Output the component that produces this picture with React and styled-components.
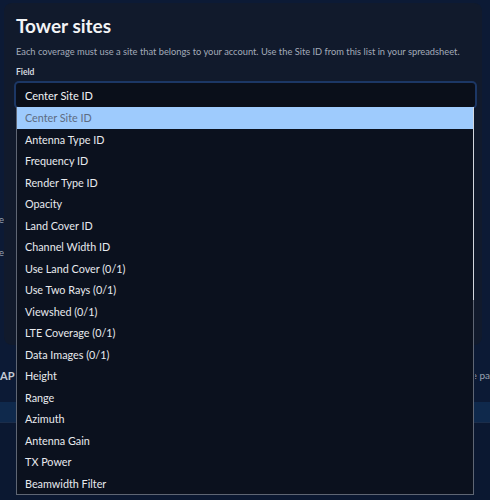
import React, { useState } from 'react';
import styled, { createGlobalStyle } from 'styled-components';

const fields = [
  'Center Site ID',
  'Antenna Type ID',
  'Frequency ID',
  'Render Type ID',
  'Opacity',
  'Land Cover ID',
  'Channel Width ID',
  'Use Land Cover (0/1)',
  'Use Two Rays (0/1)',
  'Viewshed (0/1)',
  'LTE Coverage (0/1)',
  'Data Images (0/1)',
  'Height',
  'Range',
  'Azimuth',
  'Antenna Gain',
  'TX Power',
  'Beamwidth Filter',
];

const GlobalStyle = createGlobalStyle`
  body {
    margin: 0;
    background: #0c1a35;
    font-family: Lato, "Noto Sans", sans-serif;
  }
`;

const App = () => {
  const [selected, setSelected] = useState(fields[0]);

  return (
    <Page>
      <GlobalStyle />
      <Backdrop>
        <EdgeText top={213}>visible</EdgeText>
        <EdgeText top={20}>the range</EdgeText>
        <Spacer height={104} />
        <ApiRow>
          <ApiTitle>AP</ApiTitle>
          <ApiHint>
            <span>Use the pa</span>
          </ApiHint>
        </ApiRow>
        <TableHead />
        <TableBody />
      </Backdrop>

      <Modal>
        <Title>Tower sites</Title>
        <Description>
          Each coverage must use a site that belongs to your account. Use the Site ID from this list in your spreadsheet.
        </Description>
        <Label>Field</Label>
        <SelectWrap>
          <SelectRing>
            <SelectBox>{selected}</SelectBox>
          </SelectRing>
          <OptionList>
            {fields.map((f) => (
              <Option key={f} active={f === selected} onClick={() => setSelected(f)}>
                {f}
              </Option>
            ))}
            <ScrollThumb />
          </OptionList>
        </SelectWrap>
      </Modal>
    </Page>
  );
};

const Page = styled.div`
  position: relative;
  width: 490px;
  height: 500px;
  overflow: hidden;
  background: #0c1a35;
`;

const Backdrop = styled.div`
  display: flex;
  flex-direction: column;
  height: 100%;
`;

const EdgeText = styled.div`
  display: flex;
  justify-content: flex-end;
  width: 4px;
  margin-top: ${(p) => p.top}px;
  overflow: hidden;
  white-space: nowrap;
  font-size: 10px;
  line-height: 13px;
  color: #9aa3b2;
`;

const Spacer = styled.div`
  height: ${(p) => p.height}px;
`;

const ApiRow = styled.div`
  display: flex;
  justify-content: space-between;
  align-items: center;
  height: 24px;
`;

const ApiTitle = styled.div`
  font-size: 11px;
  font-weight: 700;
  color: #c4cad4;
`;

const ApiHint = styled.div`
  display: flex;
  justify-content: flex-end;
  width: 15px;
  overflow: hidden;
  white-space: nowrap;
  font-size: 10px;
  color: #9aa3b2;
`;

const TableHead = styled.div`
  margin-top: 15px;
  height: 20px;
  background: #0f294c;
  border-bottom: 1px solid #1b2d4a;
`;

const TableBody = styled.div`
  flex: 1;
  background: #0b1831;
`;

const Modal = styled.div`
  position: absolute;
  top: 3px;
  left: 4px;
  width: 478px;
  height: 342px;
  box-sizing: border-box;
  padding: 11px 5px 0 10px;
  background: #111a2c;
  border-radius: 8px;
  display: flex;
  flex-direction: column;
`;

const Title = styled.h2`
  margin: 0 0 0 2px;
  font-size: 19px;
  line-height: 24px;
  font-weight: 700;
  color: #f3f4f6;
`;

const Description = styled.p`
  margin: 8px 0 0 2px;
  font-size: 9.3px;
  line-height: 12px;
  color: #a3abb9;
  white-space: nowrap;
`;

const Label = styled.div`
  margin: 9px 0 0 2px;
  font-size: 8.5px;
  line-height: 10px;
  font-weight: 700;
  color: #d4d8df;
`;

const SelectWrap = styled.div`
  position: relative;
  margin-top: 4px;
`;

const SelectRing = styled.div`
  padding: 2px;
  border-radius: 5px;
  background: #1c3765;
`;

const SelectBox = styled.div`
  height: 24px;
  display: flex;
  align-items: center;
  padding-left: 9px;
  border-radius: 3px;
  background: #0a0f1a;
  font-size: 11px;
  color: #f1f3f6;
`;

const OptionList = styled.div`
  position: absolute;
  top: 26px;
  left: 2px;
  width: 458px;
  box-sizing: border-box;
  border: 1px solid #5f6674;
  border-top: none;
  background: #0b111e;
  display: flex;
  flex-direction: column;
`;

const Option = styled.div`
  height: 21.5px;
  display: flex;
  align-items: center;
  padding-left: 8px;
  font-size: 10.8px;
  color: ${(p) => (p.active ? '#5d6b82' : '#e8eaee')};
  background: ${(p) => (p.active ? '#9ecbfd' : 'transparent')};
`;

const ScrollThumb = styled.div`
  position: absolute;
  top: 0;
  right: -1px;
  width: 1px;
  height: 193px;
  background: #d3d7de;
`;

export default App;
